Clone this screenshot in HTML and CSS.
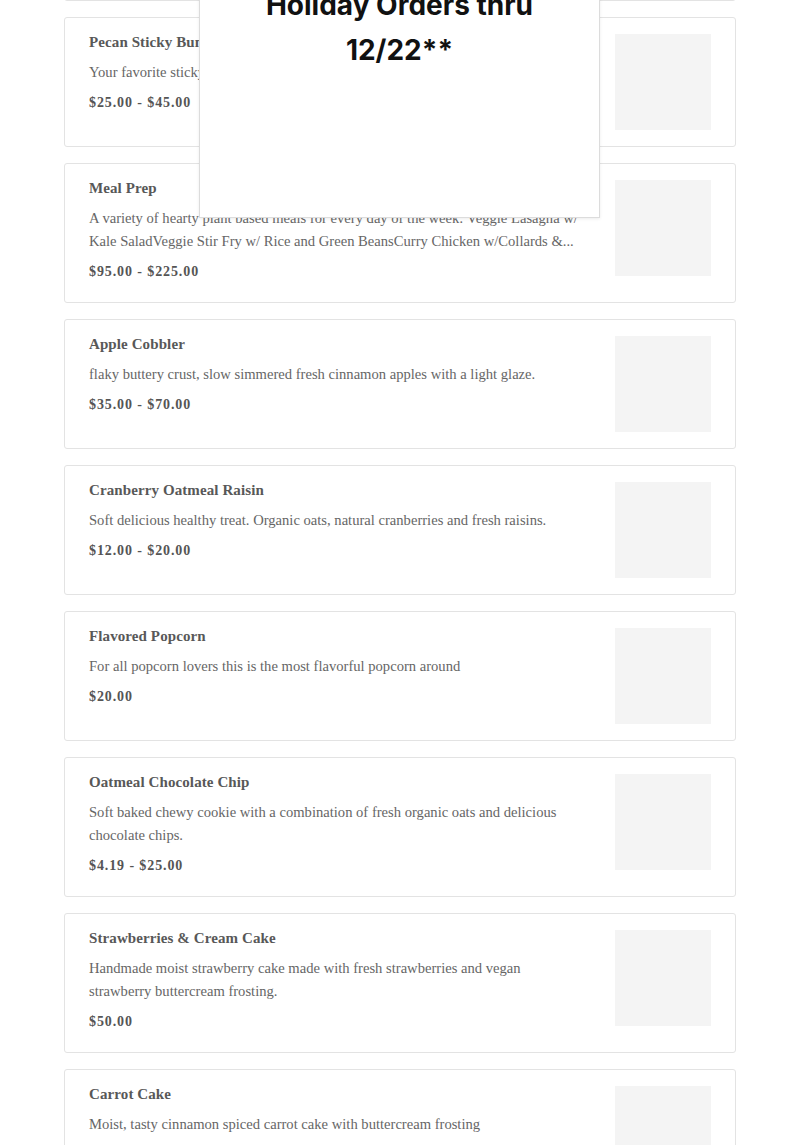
FILE: index.html
```html
<!DOCTYPE html>
<html>
<head>
<meta charset="utf-8">
<link rel="stylesheet" href="styles.css">
</head>
<body>
<div class="list">
  <div class="card">
    <div class="info">
      <div class="title">Holiday Pie</div>
      <div class="desc">Seasonal favorite.</div>
      <div class="price">$25.00</div>
    </div>
    <div class="thumb"></div>
  </div>
  <div class="card">
    <div class="info">
      <div class="title">Pecan Sticky Bun</div>
      <div class="desc">Your favorite sticky bun loaded with toasted pecans.</div>
      <div class="price">$25.00 - $45.00</div>
    </div>
    <div class="thumb"></div>
  </div>
  <div class="card">
    <div class="info">
      <div class="title">Meal Prep</div>
      <div class="desc">A variety of hearty plant based meals for every day of the week: Veggie Lasagna w/ Kale SaladVeggie Stir Fry w/ Rice and Green BeansCurry Chicken w/Collards &amp;...</div>
      <div class="price">$95.00 - $225.00</div>
    </div>
    <div class="thumb"></div>
  </div>
  <div class="card">
    <div class="info">
      <div class="title">Apple Cobbler</div>
      <div class="desc">flaky buttery crust, slow simmered fresh cinnamon apples with a light glaze.</div>
      <div class="price">$35.00 - $70.00</div>
    </div>
    <div class="thumb"></div>
  </div>
  <div class="card">
    <div class="info">
      <div class="title">Cranberry Oatmeal Raisin</div>
      <div class="desc">Soft delicious healthy treat. Organic oats, natural cranberries and fresh raisins.</div>
      <div class="price">$12.00 - $20.00</div>
    </div>
    <div class="thumb"></div>
  </div>
  <div class="card">
    <div class="info">
      <div class="title">Flavored Popcorn</div>
      <div class="desc">For all popcorn lovers this is the most flavorful popcorn around</div>
      <div class="price">$20.00</div>
    </div>
    <div class="thumb"></div>
  </div>
  <div class="card">
    <div class="info">
      <div class="title">Oatmeal Chocolate Chip</div>
      <div class="desc">Soft baked chewy cookie with a combination of fresh organic oats and delicious chocolate chips.</div>
      <div class="price">$4.19 - $25.00</div>
    </div>
    <div class="thumb"></div>
  </div>
  <div class="card">
    <div class="info">
      <div class="title">Strawberries &amp; Cream Cake</div>
      <div class="desc">Handmade moist strawberry cake made with fresh strawberries and vegan strawberry buttercream frosting.</div>
      <div class="price">$50.00</div>
    </div>
    <div class="thumb"></div>
  </div>
  <div class="card">
    <div class="info">
      <div class="title">Carrot Cake</div>
      <div class="desc">Moist, tasty cinnamon spiced carrot cake with buttercream frosting</div>
      <div class="price">$45.00</div>
    </div>
    <div class="thumb"></div>
  </div>
</div>
<div class="modal">
  <div class="modal-text">Holiday Orders thru<br>12/22**</div>
</div>
</body>
</html>
```

FILE: styles.css
```css
html, body {
  margin: 0;
  padding: 0;
  background: #fff;
  overflow: hidden;
}
body {
  width: 800px;
  height: 1145px;
  position: relative;
  font-family: "Liberation Serif", "DejaVu Serif", serif;
}
.list {
  width: 672px;
  margin: -129px auto 0;
  display: flex;
  flex-direction: column;
  gap: 16px;
}
.card {
  border: 1px solid #e3e3e3;
  border-radius: 3px;
  padding: 16px 24px;
  display: flex;
  justify-content: space-between;
  align-items: flex-start;
  gap: 31px;
}
.info {
  flex: 1;
  min-width: 0;
}
.title {
  font-size: 15px;
  font-weight: bold;
  line-height: 16px;
  color: #585858;
  letter-spacing: 0.1px;
}
.desc {
  margin-top: 11px;
  font-size: 14.6px;
  line-height: 23px;
  color: #666;
}
.price {
  margin-top: 9px;
  margin-bottom: 4px;
  font-size: 14px;
  line-height: 20px;
  font-weight: bold;
  color: #555;
  letter-spacing: 0.9px;
}
.thumb {
  width: 96px;
  height: 96px;
  flex: none;
  background: #f4f4f4;
}
.modal {
  position: absolute;
  left: 199px;
  top: -40px;
  width: 399px;
  height: 234px;
  background: #fff;
  border: 1px solid #dcdcdc;
  box-shadow: 0 1px 3px rgba(0,0,0,0.08);
  padding-top: 22px;
  box-sizing: content-box;
}
.modal-text {
  font-family: Inter, "Noto Sans", sans-serif;
  font-weight: 700;
  font-size: 28px;
  line-height: 45px;
  text-align: center;
  color: #111;
}
```
